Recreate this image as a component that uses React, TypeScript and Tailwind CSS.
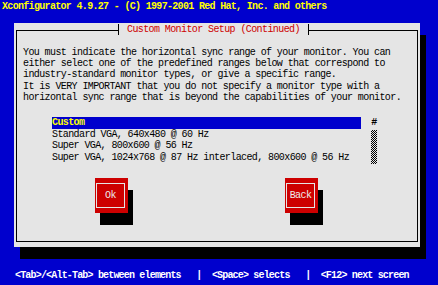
import React from "react";

const bodyLines = [
  "You must indicate the horizontal sync range of your monitor. You can",
  "either select one of the predefined ranges below that correspond to",
  "industry-standard monitor types, or give a specific range.",
  "It is VERY IMPORTANT that you do not specify a monitor type with a",
  "horizontal sync range that is beyond the capabilities of your monitor.",
];

const monitors = [
  "Custom",
  "Standard VGA, 640x480 @ 60 Hz",
  "Super VGA, 800x600 @ 56 Hz",
  "Super VGA, 1024x768 @ 87 Hz interlaced, 800x600 @ 56 Hz",
];

const Button = ({ label }: { label: string }) => (
  <div className="w-[33px] h-[35px] bg-[#cd0000] shadow-[5px_12px_0_0_#000] pl-[1px] pr-[3px] py-[5px] flex">
    <div className="flex-1 border border-[#e5e5e5] flex items-center justify-center text-[#ececec] leading-none">
      {label}
    </div>
  </div>
);

export default function App() {
  return (
    <div className="w-[438px] h-[285px] bg-[#0000cd] flex flex-col overflow-hidden font-['Liberation_Mono',monospace] text-[10px] tracking-[-0.6px]">
      {/* top line */}
      <div className="h-[12px] pl-[2px] text-[#ffff00] font-bold leading-[13px] tracking-[-0.68px] whitespace-pre">
        Xconfigurator 4.9.27 - (C) 1997-2001 Red Hat, Inc. and others
      </div>

      {/* dialog */}
      <div className="ml-[14px] mt-[11px] w-[406px] h-[224px] bg-[#e5e5e5] shadow-[6px_12px_0_0_#000] pt-[7px] px-[2px] pb-[5px] flex">
        <div className="relative flex-1 border border-black flex flex-col text-black">
          <div className="absolute left-[101px] top-[-7px] h-[11px] border-x border-black bg-[#e5e5e5] px-[8px] text-[#cd0000] leading-[11px] whitespace-pre">
            Custom Monitor Setup (Continued)
          </div>

          <div className="pl-[6px] pt-[16px] leading-[11.2px] whitespace-pre">
            {bodyLines.map((l) => (
              <div key={l}>{l}</div>
            ))}
          </div>

          <div className="mt-[14px] ml-[35px] flex">
            <div className="w-[309px] leading-[11.5px] whitespace-pre">
              {monitors.map((m, i) => (
                <div
                  key={m}
                  className={
                    i === 0
                      ? "bg-[#0000cd] text-[#ffff00] font-bold"
                      : ""
                  }
                >
                  {m}
                </div>
              ))}
            </div>
            <div className="ml-[10px] w-[6px] flex flex-col">
              <div className="h-[11.5px] leading-[11.5px] font-bold text-center">#</div>
              <div className="mt-[1.5px] h-[34px] bg-[repeating-conic-gradient(#000_0_25%,#e5e5e5_0_50%)] bg-size-[2px_2px]" />
            </div>
          </div>

          <div className="mt-[14px] pl-[78px] flex gap-[157px]">
            <Button label="Ok" />
            <Button label="Back" />
          </div>
        </div>
      </div>

      {/* help line */}
      <div className="mt-[23px] h-[12px] pl-[15px] text-white font-bold leading-[12px] tracking-[-0.82px] whitespace-pre">
        {"<Tab>/<Alt-Tab> between elements   |  <Space> selects   |  <F12> next screen"}
      </div>
    </div>
  );
}
